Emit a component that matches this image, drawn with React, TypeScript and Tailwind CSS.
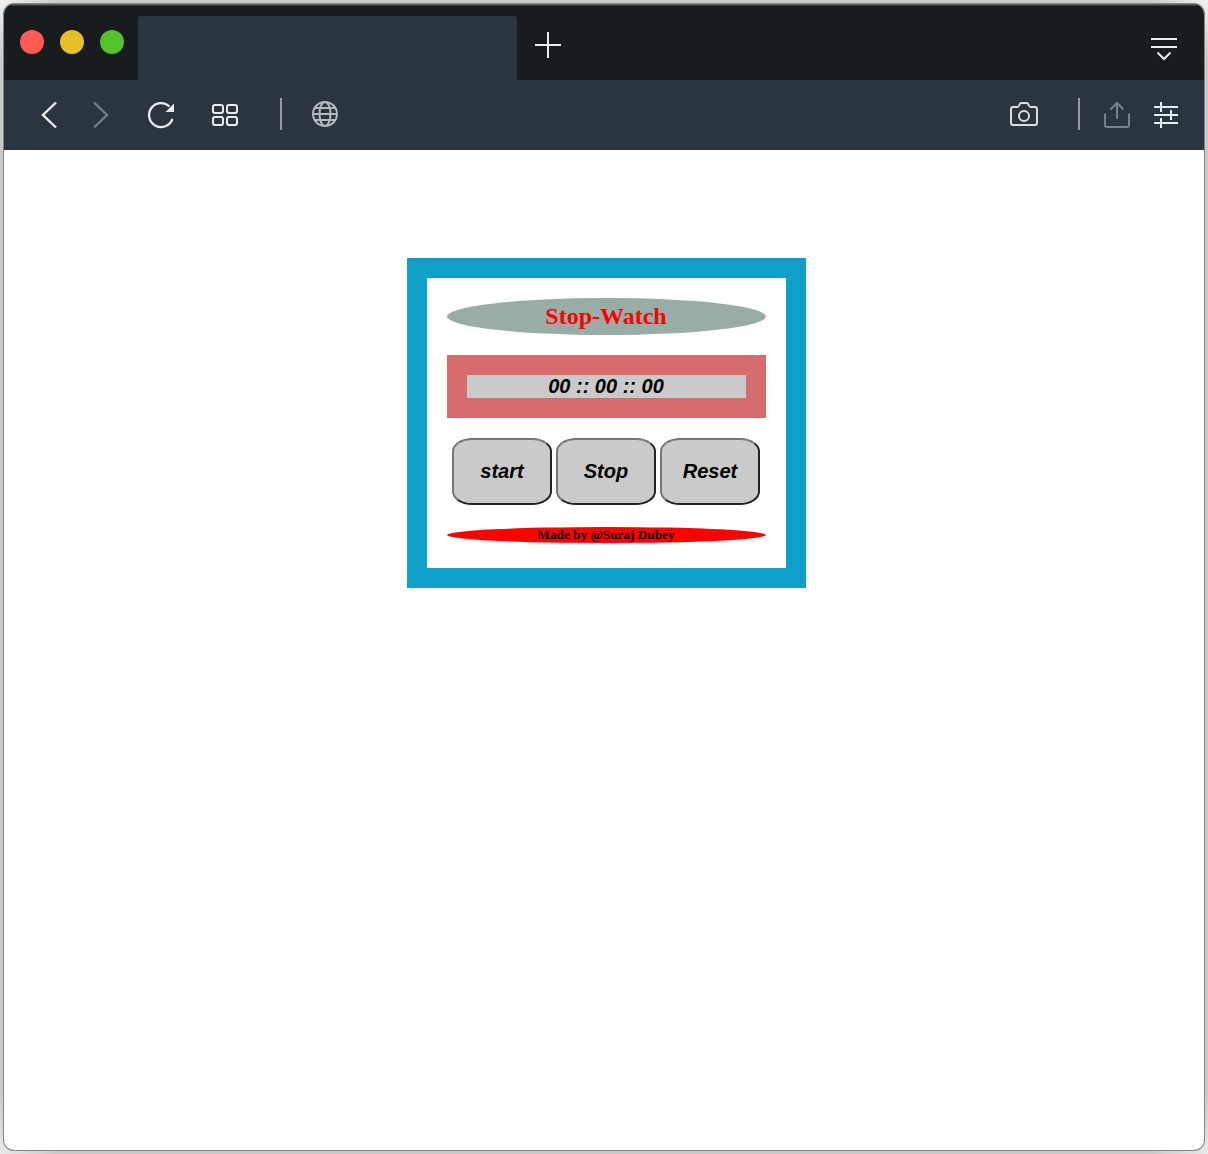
import React from "react";

function StopButton({ label }: { label: string }) {
  return (
    <button className="flex h-[67px] w-[100px] items-center justify-center rounded-[20%] border-2 border-t-[#767676] border-l-[#767676] border-r-[#212121] border-b-[#212121] bg-[#cacaca] font-['Liberation_Sans',sans-serif] text-[20px] leading-[23px] font-bold italic text-black">
      {label}
    </button>
  );
}

function TabBar() {
  return (
    <div className="flex h-[76px] shrink-0 bg-[#181c1f] shadow-[inset_0_1px_0_#5d6264,inset_0_2px_0_#343a3b]">
      <div className="flex w-[134px] gap-4 pt-[26px] pl-4">
        <span className="size-6 rounded-full bg-[#ff5a54]" />
        <span className="size-6 rounded-full bg-[#e6bf29]" />
        <span className="size-6 rounded-full bg-[#54c22b]" />
      </div>
      <div className="mt-3 h-16 w-[379px] rounded-t-[3px] bg-[#2b353f]" />
      <svg className="mt-[27px] ml-[17px] h-7 w-7" viewBox="0 0 28 28" fill="none" stroke="#eeeeee" strokeWidth="2">
        <path d="M1 14h26M14 1v26" />
      </svg>
      <svg className="mt-8 mr-[26px] ml-auto h-[26px] w-7" viewBox="0 0 28 26" fill="none" stroke="#e9eeee" strokeWidth="2">
        <path d="M1 3h26M1 11h26M7.500 16.500l6.500 6.500 6.500-6.500" />
      </svg>
    </div>
  );
}

function Toolbar() {
  return (
    <div className="flex h-[70px] shrink-0 items-center bg-[#2b353f]">
      <svg className="ml-9 h-8 w-5" viewBox="0 0 20 32" fill="none" stroke="#eef1f1" strokeWidth="2.400">
        <path d="M16 3.500L3 16l13 12.500" />
      </svg>
      <svg className="ml-8 h-8 w-5" viewBox="0 0 20 32" fill="none" stroke="#747c84" strokeWidth="2.400">
        <path d="M2 3.500L15 16 2 28.500" />
      </svg>
      <svg className="ml-[33px] h-8 w-8" viewBox="0 0 32 32" fill="none" stroke="#e9eeee" strokeWidth="2.300">
        <path d="M24.500 7.500A12 12 0 1 0 27.400 20" />
        <path d="M29 4.500V13h-8.500z" fill="#e9eeee" stroke="none" />
      </svg>
      <svg className="ml-[33px] h-8 w-8" viewBox="0 0 32 32" fill="none" stroke="#e9eeee" strokeWidth="2">
        <rect x="3" y="6" width="10" height="8" rx="2" />
        <rect x="17" y="6" width="10" height="8" rx="2" />
        <rect x="3" y="18" width="10" height="8" rx="2" />
        <rect x="17" y="18" width="10" height="8" rx="2" />
      </svg>
      <span className="mb-[2px] ml-[38px] h-8 w-[2px] bg-[#99989a]" />
      <svg className="mb-[2px] ml-[27px] h-8 w-8" viewBox="0 0 32 32" fill="none" stroke="#b3b9be" strokeWidth="2">
        <circle cx="16" cy="16" r="12" />
        <ellipse cx="16" cy="16" rx="5.500" ry="12" />
        <path d="M4 16h24M6 10h20M6 22h20" />
      </svg>
      <svg className="ml-auto h-8 w-8" viewBox="0 0 32 32" fill="none" stroke="#d9dfdf" strokeWidth="2" strokeLinejoin="round">
        <path d="M5 8h4.500c1.800 0 2-4 3.500-4h6c1.500 0 1.700 4 3.500 4H27q2 0 2 2v14q0 2-2 2H5q-2 0-2-2V10q0-2 2-2z" />
        <circle cx="16" cy="17" r="5" />
      </svg>
      <span className="mb-[2px] ml-[38px] h-8 w-[2px] bg-[#99989a]" />
      <svg className="ml-[21px] h-8 w-8" viewBox="0 0 32 32" fill="none" stroke="#78818a" strokeWidth="2">
        <path d="M4 14.500V26q0 2 2 2h20q2 0 2-2V14.500M16 20V4M9.500 10.500L16 4l6.500 6.500" />
      </svg>
      <svg className="mr-[22px] ml-[17px] h-8 w-8" viewBox="0 0 32 32" fill="none" stroke="#e4effa" strokeWidth="2">
        <path d="M4 8h24M4 16h24M4 24h24M11 3v10M21 11v10M11 19v10" />
      </svg>
    </div>
  );
}

export default function App() {
  return (
    <div className="h-[1154px] w-[1208px] bg-[#c9c9c9] bg-[radial-gradient(circle_at_0_0,#f2f2f2,transparent_60px),radial-gradient(circle_at_100%_0,#f2f2f2,transparent_60px),radial-gradient(circle_at_0_100%,#e8e8e8,transparent_60px),radial-gradient(circle_at_100%_100%,#e8e8e8,transparent_60px)] p-1">
      <div className="flex h-[1146px] w-[1200px] flex-col overflow-hidden rounded-[10px] bg-white shadow-[0_0_0_1px_#858585]">
        <TabBar />
        <Toolbar />
        <main className="flex-1 pt-[108px] pl-[403px]">
          <section className="flex h-[330px] w-[399px] flex-col border-[20px] border-[#0fa0ca] p-5">
            <h1 className="h-[37px] shrink-0 rounded-[50%] bg-[#98ada6] pt-[5px] pr-px text-center font-['Liberation_Serif',serif] text-[24px] leading-[27px] font-bold text-[#ff0000]">
              Stop-Watch
            </h1>
            <div className="mt-5 border-[20px] border-[#d66c6c] bg-[#cacaca] pr-px text-center font-['Liberation_Sans',sans-serif] text-[20px] leading-[23px] font-bold italic text-black">
              00 :: 00 :: 00
            </div>
            <div className="mt-5 flex gap-1 pl-[5px]">
              <StopButton label="start" />
              <StopButton label="Stop" />
              <StopButton label="Reset" />
            </div>
            <footer className="mt-[22px] h-4 shrink-0 rounded-[50%] bg-[#ff0000] pr-px text-center font-['Liberation_Serif',serif] text-[13.28px] leading-[15px] font-bold text-black">
              Made by @Suraj Dubey
            </footer>
          </section>
        </main>
      </div>
    </div>
  );
}
